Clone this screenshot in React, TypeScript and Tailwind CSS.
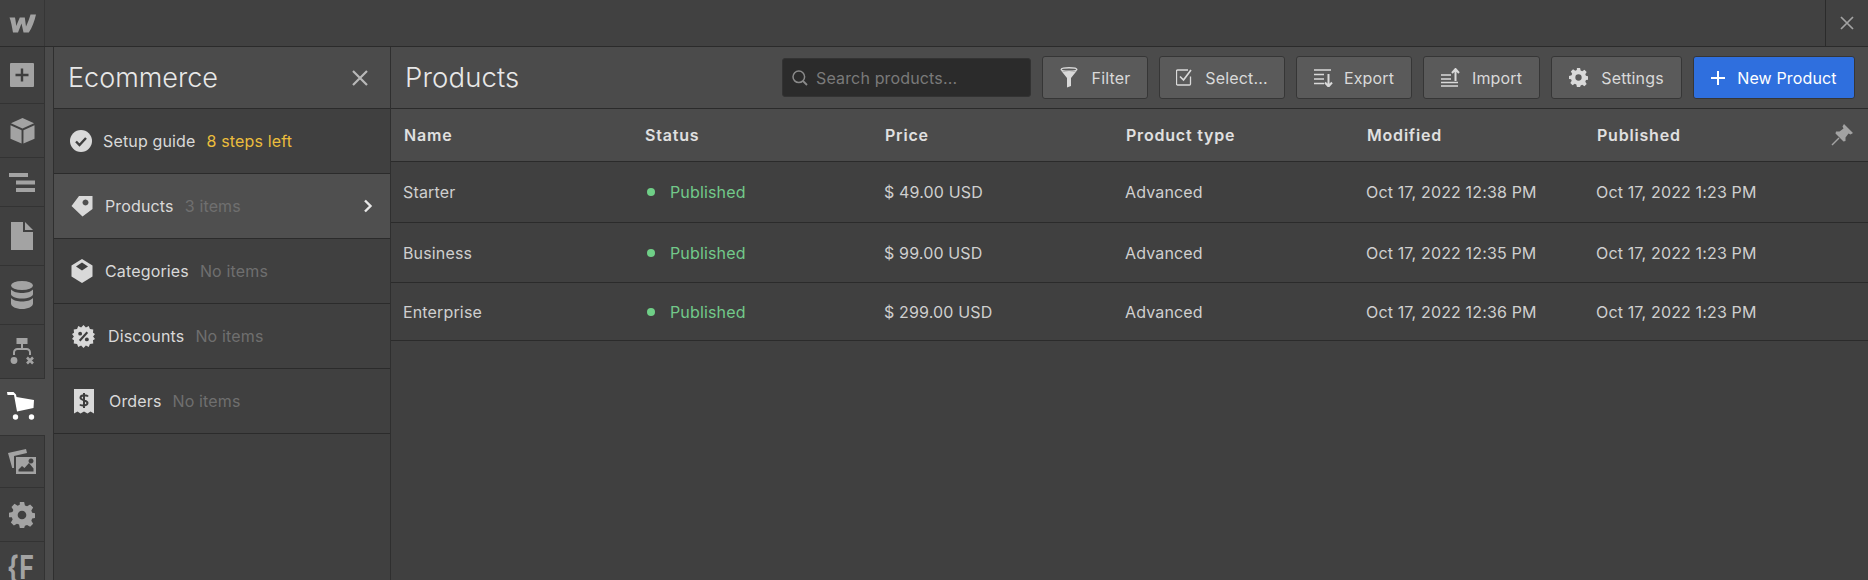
import React from "react";

const font = { fontFamily: "Inter, 'Noto Sans', sans-serif" };

const Logo = () => (
  <svg width="27" height="19" viewBox="0 0 27 19" fill="#a3a3a3">
    <path d="M27 0.500C25.500 7 23 14 19.800 18.500H14.500L12.500 9.500 9 18.500H4C3 13 2 7 0.500 3.500H6C6.500 6 7 9 7.200 12L10.800 3.500H15.800L17 12.500C19 8 20.500 4 21.500 0.500Z" />
  </svg>
);

const Gear = ({ size, fill }: { size: number; fill: string }) => (
  <svg width={size} height={size} viewBox="0 0 24 24" fill={fill}>
    <path
      fillRule="evenodd"
      d="M10 0h4l.7 3.200 2 .8L19.500 2.300l2.800 2.800-1.700 2.800.8 2 3.200.7v4l-3.200.7-.8 2 1.700 2.800-2.800 2.800-2.800-1.700-2 .8L14 24h-4l-.7-3.200-2-.8-2.800 1.700-2.800-2.800 1.700-2.800-.8-2L0 14v-4l3.200-.7.8-2-1.700-2.800 2.800-2.800L7.900 3.400l2-.8ZM12 8a4 4 0 1 0 0 8 4 4 0 0 0 0-8Z"
    />
  </svg>
);

const railIcons: { h: string; icon: React.ReactNode }[] = [
  {
    h: "h-[57px]",
    icon: (
      <svg width="24" height="24" viewBox="0 0 24 24">
        <rect width="24" height="24" rx="1" fill="#a3a3a3" />
        <path d="M12 5.500v13M5.500 12h13" stroke="#3e3e3e" strokeWidth="2.400" />
      </svg>
    ),
  },
  {
    h: "h-[54px]",
    icon: (
      <svg width="25" height="26" viewBox="0 0 26 27" fill="#a3a3a3">
        <path d="M13 0 25 5.500 13 11 1 5.500Z" />
        <path d="M0.500 7.500 12 12.800V26.500L0.500 21.500Z" />
        <path d="M25.500 7.500 14 12.800V26.500L25.500 21.500Z" />
      </svg>
    ),
  },
  {
    h: "h-[49px]",
    icon: (
      <svg width="26" height="19" viewBox="0 0 26 19" fill="#a3a3a3">
        <rect x="0" y="0" width="19" height="4" />
        <rect x="7" y="7.500" width="19" height="4" />
        <rect x="7" y="15" width="19" height="4" />
      </svg>
    ),
  },
  {
    h: "h-[59px]",
    icon: (
      <svg width="22" height="28" viewBox="0 0 22 28" fill="#a3a3a3">
        <path d="M0 0H12V10H22V28H0Z" />
        <path d="M14 0 22 8H14Z" />
      </svg>
    ),
  },
  {
    h: "h-[59px]",
    icon: (
      <svg width="24" height="28" viewBox="0 0 24 28" fill="#a3a3a3">
        <ellipse cx="12" cy="4.500" rx="11" ry="4.500" />
        <path d="M1 8.500C3 11 8 12 12 12s9-1 11-3.500V13c0 2.500-5 4.500-11 4.500S1 15.500 1 13Z" />
        <path d="M1 17c2 2.500 7 3.500 11 3.500s9-1 11-3.500v5.500C23 25.500 18 28 12 28S1 25.500 1 22.500Z" />
      </svg>
    ),
  },
  {
    h: "h-[54px]",
    icon: (
      <svg width="24" height="27" viewBox="0 0 24 27" fill="#a3a3a3">
        <rect x="6.500" y="0" width="11" height="6" />
        <path d="M12 6v5M4 17v-2.500a3.500 3.500 0 0 1 3.500-3.500h9a3.500 3.500 0 0 1 3.500 3.500V17" stroke="#a3a3a3" strokeWidth="2" fill="none" />
        <circle cx="4" cy="22.500" r="3.400" />
        <path d="M17 19.500 23 25.500M23 19.500 17 25.500" stroke="#a3a3a3" strokeWidth="2.600" />
      </svg>
    ),
  },
];

const railBottom = [
  {
    h: "h-[53px]",
    icon: (
      <svg width="28" height="25" viewBox="0 0 28 25" fill="#a3a3a3">
        <path d="M0 4 18 0 19 4 6 7V19H4.200Z" />
        <path d="M8 8H28V25H8ZM10.500 22.500H25.500V19.500L21 14 16.500 19 14 17 10.500 20.500ZM23 9.500a2.500 2.500 0 1 0 .01 0Z" fillRule="evenodd" />
      </svg>
    ),
  },
  { h: "h-[54px]", icon: <Gear size={26} fill="#a3a3a3" /> },
];

const panelRows = [
  {
    name: "Setup guide",
    note: "8 steps left",
    noteCls: "text-[#ebbd3c]",
    gap: "ml-[16px]",
    textGap: "ml-[11px]",
    icon: (
      <svg width="22" height="22" viewBox="0 0 22 22">
        <circle cx="11" cy="11" r="11" fill="#d9d9d9" />
        <path d="M6 11.500 9.500 15 16 8" stroke="#3e3e3e" strokeWidth="2.400" fill="none" />
      </svg>
    ),
  },
  {
    name: "Products",
    note: "3 items",
    noteCls: "text-[#6f6f6f]",
    active: true,
    gap: "ml-[17px]",
    textGap: "ml-[12px]",
    icon: (
      <svg width="22" height="22" viewBox="0 0 22 22">
        <path fill="#d9d9d9" fillRule="evenodd" d="M8 1H21.500V14L11.500 21.500 0.500 11ZM14.500 4.500a3 3 0 1 0 .01 0Z" />
      </svg>
    ),
  },
  {
    name: "Categories",
    note: "No items",
    noteCls: "text-[#6f6f6f]",
    gap: "ml-[17px]",
    textGap: "ml-[12px]",
    icon: (
      <svg width="22" height="24" viewBox="0 0 22 24">
        <path fill="#d9d9d9" d="M11 0 21.500 6.500V17.500L11 24 .5 17.500V6.500Z" />
        <path fill="#3e3e3e" d="M11 3.500 17 7.500 11 11.500 5 7.500Z" />
      </svg>
    ),
  },
  {
    name: "Discounts",
    note: "No items",
    noteCls: "text-[#6f6f6f]",
    gap: "ml-[18px]",
    textGap: "ml-[13px]",
    icon: (
      <svg width="23" height="23" viewBox="0 0 24 24">
        <path
          fill="#d9d9d9"
          d="M12 0l2.500 2.500L17.500 1l1.200 3.300 3.500.3-.3 3.500L24 9.500 22 12l2 2.500-2.100 1.400.3 3.500-3.500.3L17.500 23l-3-1.500L12 24l-2.500-2.500L6.500 23l-1.200-3.300-3.500-.3.3-3.500L0 14.500 2 12 0 9.500l2.100-1.400-.3-3.500 3.500-.3L6.500 1l3 1.500Z"
        />
        <path d="M8 16.500 16 7.500" stroke="#3e3e3e" strokeWidth="2.200" />
        <circle cx="8.500" cy="9" r="2" fill="#3e3e3e" />
        <circle cx="15.500" cy="15" r="2" fill="#3e3e3e" />
      </svg>
    ),
  },
  {
    name: "Orders",
    note: "No items",
    noteCls: "text-[#6f6f6f]",
    gap: "ml-[20px]",
    textGap: "ml-[15px]",
    icon: (
      <svg width="20" height="25" viewBox="0 0 20 25">
        <path fill="#d9d9d9" d="M0 0H20V24.500L16.500 22.500 13.500 24.500 10 22.500 6.500 24.500 3.500 22.500 0 24.500Z" />
        <path d="M14 7.500C13 6 7 5.500 6.500 8.500S13.500 11 13.500 14 7 17 6 15.500M10 4v15" stroke="#3e3e3e" strokeWidth="2" fill="none" />
      </svg>
    ),
  },
];

const btnCls =
  "h-[43px] flex items-center justify-center rounded-[3px] border border-[#363636] bg-[#5a5a5a] text-[16px] text-[#d9d9d9]";

const buttons: { label: string; w: string; iconGap: string; icon: React.ReactNode }[] = [
  {
    label: "Filter",
    w: "w-[106px]",
    iconGap: "gap-[14px]",
    icon: (
      <svg width="18" height="21" viewBox="0 0 18 21" fill="none">
        <ellipse cx="9" cy="2.500" rx="7.800" ry="1.700" stroke="#d9d9d9" strokeWidth="1.500" />
        <path d="M1 3.500 7 11V20.500L11 19V11L17 3.500C13 5.500 5 5.500 1 3.500Z" fill="#d9d9d9" />
      </svg>
    ),
  },
  {
    label: "Select...",
    w: "w-[126px]",
    iconGap: "gap-[13px]",
    icon: (
      <svg width="16" height="17" viewBox="0 0 16 17" fill="none" stroke="#d9d9d9" strokeWidth="1.300">
        <path d="M14.500 7.500V15a1 1 0 0 1-1 1H1.500a1 1 0 0 1-1-1V2a1 1 0 0 1 1-1H12" />
        <path d="M4 7.500 7.500 11 15 1" strokeWidth="1.700" />
      </svg>
    ),
  },
  {
    label: "Export",
    w: "w-[116px]",
    iconGap: "gap-[11px]",
    icon: (
      <svg width="19" height="19" viewBox="0 0 19 19" fill="none" stroke="#d9d9d9" strokeWidth="1.500">
        <path d="M0 2h17M0 6.500h10M0 11h10M0 15.500h10" />
        <path d="M14.500 6v12M11 14.500l3.500 4 3.500-4" strokeWidth="2" />
      </svg>
    ),
  },
  {
    label: "Import",
    w: "w-[117px]",
    iconGap: "gap-[12px]",
    icon: (
      <svg width="19" height="19" viewBox="0 0 19 19" fill="none" stroke="#d9d9d9" strokeWidth="1.300">
        <path d="M0 7h10M0 11h10M0 14.500h17M0 18h17" />
        <path d="M14.500 13V1.500M11 5l3.500-4 3.500 4" strokeWidth="2" />
      </svg>
    ),
  },
  {
    label: "Settings",
    w: "w-[131px]",
    iconGap: "gap-[13px]",
    icon: <Gear size={19} fill="#d9d9d9" />,
  },
];

const columns = [
  { label: "Name", w: "w-[241px]" },
  { label: "Status", w: "w-[240px]" },
  { label: "Price", w: "w-[241px]" },
  { label: "Product type", w: "w-[241px]" },
  { label: "Modified", w: "w-[230px]" },
  { label: "Published", w: "w-[200px]" },
];

const products = [
  { name: "Starter", price: "$ 49.00 USD", modified: "Oct 17, 2022 12:38 PM", h: "h-[61px]" },
  { name: "Business", price: "$ 99.00 USD", modified: "Oct 17, 2022 12:35 PM", h: "h-[60px]" },
  { name: "Enterprise", price: "$ 299.00 USD", modified: "Oct 17, 2022 12:36 PM", h: "h-[58px]" },
];

export default function App() {
  return (
    <div className="w-[1868px] h-[580px] overflow-hidden flex flex-col bg-[#404040] tracking-[0.15px]" style={font}>
      {/* Top bar */}
      <div className="h-[47px] shrink-0 flex border-b border-[#2b2b2b] bg-[#414141]">
        <div className="w-[45px] flex items-center justify-center border-r border-[#363636]">
          <Logo />
        </div>
        <div className="flex-1" />
        <div className="w-[43px] flex items-center justify-center border-l border-[#2b2b2b]">
          <svg width="14" height="14" viewBox="0 0 14 14" stroke="#a3a3a3" strokeWidth="1.700">
            <path d="M1 1 13 13M13 1 1 13" />
          </svg>
        </div>
      </div>

      <div className="flex-1 flex min-h-0">
        {/* Icon rail */}
        <div className="w-[54px] shrink-0 flex flex-col bg-[#4b4b4b] border-r border-[#2f2f2f]">
          {railIcons.map((r, i) => (
            <div key={i} className={`${r.h} shrink-0 w-[45px] flex items-center justify-center bg-[#404040] border-b border-r border-[#333333]`}>
              {r.icon}
            </div>
          ))}
          <div className="h-[56px] shrink-0 flex items-center pl-[7px] pb-[2px] bg-[#4b4b4b]">
            <svg width="28" height="28" viewBox="0 0 28 28" fill="#ffffff">
              <path d="M0 0H6.500L9 2.500 9.500 5 27 8 26.500 16 10 19.500 7 3H0.500Z" />
              <circle cx="8.500" cy="25" r="2.700" />
              <circle cx="24.500" cy="25" r="2.700" />
            </svg>
          </div>
          {railBottom.map((r, i) => (
            <div key={i} className={`${r.h} shrink-0 w-[45px] flex items-center justify-center bg-[#404040] border-b border-r border-[#333333] ${i === 0 ? "border-t" : ""}`}>
              {r.icon}
            </div>
          ))}
          <div className="flex-1 w-[45px] bg-[#404040] border-r border-[#333333] overflow-hidden pt-[8px] pl-[7px] text-[32px] leading-[36px] font-bold text-[#a3a3a3] whitespace-nowrap">
            <span className="inline-block origin-left scale-x-[0.78]">{"{F"}</span>
          </div>
        </div>

        {/* Ecommerce panel */}
        <div className="w-[337px] shrink-0 flex flex-col border-r border-[#2f2f2f] bg-[#404040]">
          <div className="h-[62px] shrink-0 flex items-center justify-between pl-[14px] pr-[22px] pt-[1px] border-b border-[#2b2b2b] bg-[#4b4b4b]">
            <span className="text-[27px] font-light tracking-normal text-[#e8e8e8]">Ecommerce</span>
            <svg width="16" height="16" viewBox="0 0 16 16" stroke="#b8b8b8" strokeWidth="2.200">
              <path d="M1 1 15 15M15 1 1 15" />
            </svg>
          </div>
          {panelRows.map((row) => (
            <div
              key={row.name}
              className={`h-[65px] shrink-0 flex items-center border-b border-[#2b2b2b] text-[16px] ${row.active ? "bg-[#4f4f4f]" : "bg-[#404040]"}`}
            >
              <div className={`${row.gap} flex items-center justify-center`}>{row.icon}</div>
              <span className={`${row.textGap} text-[#d9d9d9]`}>{row.name}</span>
              <span className={`ml-[11px] ${row.noteCls}`}>{row.note}</span>
              {row.active && (
                <svg className="ml-auto mr-[17px]" width="10" height="14" viewBox="0 0 10 14" fill="none" stroke="#e8e8e8" strokeWidth="2.400">
                  <path d="M2 1.500 7.500 7 2 12.500" />
                </svg>
              )}
            </div>
          ))}
        </div>

        {/* Products */}
        <div className="flex-1 min-w-0 flex flex-col">
          <div className="h-[62px] shrink-0 flex items-center pl-[14px] border-b border-[#2b2b2b] bg-[#4b4b4b]">
            <span className="text-[27.5px] font-light text-[#e8e8e8]">Products</span>
            <div className="ml-auto flex items-center gap-[11px] pr-[13px]">
              <div className="w-[249px] h-[39px] flex items-center gap-[8px] pl-[9px] rounded-[3px] border border-[#333333] bg-[#2b2b2b] text-[16px] text-[#7a7a7a]">
                <svg width="16" height="16" viewBox="0 0 16 16" fill="none" stroke="#8a8a8a" strokeWidth="1.500">
                  <circle cx="6.800" cy="6.800" r="5.800" />
                  <path d="M11 11 15 15" strokeWidth="1.800" />
                </svg>
                <span>Search products...</span>
              </div>
              {buttons.map((b) => (
                <button key={b.label} className={`${btnCls} ${b.w} ${b.iconGap}`}>
                  {b.icon}
                  <span>{b.label}</span>
                </button>
              ))}
              <button className="w-[162px] h-[43px] flex items-center justify-center gap-[12px] rounded-[3px] border border-[#363636] bg-[#2f6fde] text-[16px] text-white">
                <svg width="14" height="14" viewBox="0 0 14 14" stroke="#ffffff" strokeWidth="2">
                  <path d="M7 0v14M0 7h14" />
                </svg>
                <span>New Product</span>
              </button>
            </div>
          </div>

          <div className="h-[53px] shrink-0 flex items-center pl-[13px] border-b border-[#2b2b2b] bg-[#4b4b4b]">
            {columns.map((c) => (
              <div key={c.label} className={`${c.w} shrink-0 text-[16px] font-semibold tracking-[0.8px] text-[#e0e0e0]`}>
                {c.label}
              </div>
            ))}
            <svg className="ml-auto mr-[15px]" width="22" height="22" viewBox="0 0 22 22" fill="#a3a3a3">
              <path d="M13 0 22 9 19.500 10.500 17.500 9.500 14.500 13.500 14.500 17 12.500 17.500 4.500 9.500 5 7.500 8.500 7.500 12.500 4.500 11.500 2.500Z" />
              <path d="M8 14 1 21" stroke="#a3a3a3" strokeWidth="1.500" />
            </svg>
          </div>

          {products.map((p) => (
            <div key={p.name} className={`${p.h} shrink-0 flex items-center pl-[12px] border-b border-[#2b2b2b] text-[16px] text-[#cfcfcf]`}>
              <div className="w-[241px] shrink-0">{p.name}</div>
              <div className="w-[240px] shrink-0 flex items-center text-[#72c98a]">
                <span className="ml-[3px] w-[8px] h-[8px] rounded-full bg-[#6fcf87]" />
                <span className="ml-[15px]">Published</span>
              </div>
              <div className="w-[241px] shrink-0">{p.price}</div>
              <div className="w-[241px] shrink-0">Advanced</div>
              <div className="w-[230px] shrink-0">{p.modified}</div>
              <div className="shrink-0">Oct 17, 2022 1:23 PM</div>
            </div>
          ))}
        </div>
      </div>
    </div>
  );
}
